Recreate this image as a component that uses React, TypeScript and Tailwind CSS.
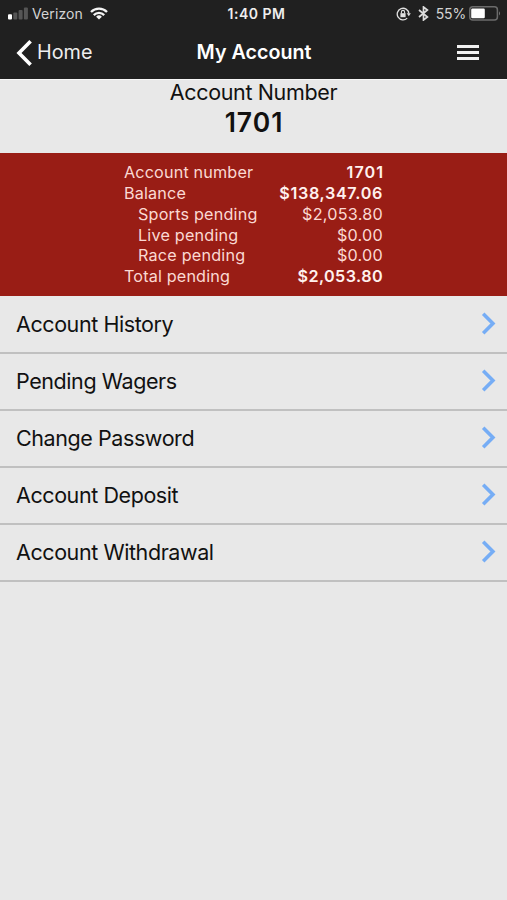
import React from "react";

const accountRows = [
  { label: "Account number", value: "1701", strong: true, tracking: "tracking-[1px] -mr-px" },
  { label: "Balance", value: "$138,347.06", strong: true, tracking: "tracking-[0.65px]" },
  { label: "Sports pending", value: "$2,053.80", indent: true, tracking: "tracking-[0.25px]" },
  { label: "Live pending", value: "$0.00", indent: true, tracking: "tracking-[0.25px]" },
  { label: "Race pending", value: "$0.00", indent: true, tracking: "tracking-[0.25px]" },
  { label: "Total pending", value: "$2,053.80", strong: true, tracking: "tracking-[0.4px]" },
];

const menuItems = [
  "Account History",
  "Pending Wagers",
  "Change Password",
  "Account Deposit",
  "Account Withdrawal",
];

function StatusBar() {
  return (
    <div className="grid h-[27px] grid-cols-3 items-center text-[13px] leading-none text-[#d4d4d4]">
      <div className="flex items-center pl-2">
        <svg width="20" height="13" viewBox="0 0 20 13">
          <rect x="0" y="7.2" width="4" height="5.4" rx="1" fill="#fff" />
          <rect x="5.3" y="5.4" width="4" height="7.2" rx="1" fill="#555" />
          <rect x="10.6" y="3" width="4" height="9.6" rx="1" fill="#555" />
          <rect x="15.9" y="0.5" width="4" height="12.1" rx="1" fill="#555" />
        </svg>
        <span className="ml-[4px] text-[14px] tracking-[0.1px]">Verizon</span>
        <svg className="ml-[7px]" width="18" height="13" viewBox="0 0 18 13" fill="none" stroke="#f4f4f4" strokeWidth="2.3">
          <path d="M1 5a11.3 11.3 0 0 1 16 0" />
          <path d="M3.8 8.1a7.3 7.3 0 0 1 10.4 0" />
          <path d="M9 12.6 6.1 9.8a4.1 4.1 0 0 1 5.8 0z" fill="#f4f4f4" stroke="none" />
        </svg>
      </div>
      <div className="pl-1.5 pt-px text-center text-[14px] font-semibold tracking-[0.5px] text-[#eeeeee]">1:40 PM</div>
      <div className="flex items-center justify-end pr-[6px]">
        <svg width="15" height="14" viewBox="0 0 15 14" fill="none" stroke="#e0e0e0" strokeWidth="1.3">
          <path d="M11.2 11.1A5.8 5.8 0 1 1 12.8 6.4" />
          <path d="M10.7 6.2h4.1l-2 3z" fill="#e0e0e0" stroke="none" />
          <rect x="4.4" y="6.2" width="5.2" height="4" fill="#e0e0e0" stroke="none" />
          <path d="M5.4 6.4V5a1.6 1.6 0 0 1 3.2 0v1.4" strokeWidth="1.1" />
        </svg>
        <svg className="ml-[7px]" width="11" height="15" viewBox="0 0 11 15" fill="none" stroke="#dddddd" strokeWidth="1.7">
          <path d="m1 4 8.4 7L5.5 14V1l3.9 3L1 11" />
        </svg>
        <span className="ml-[7px] text-[14px] tracking-[-0.01em]">55%</span>
        <svg className="ml-[3px]" width="32" height="15" viewBox="0 0 32 15">
          <rect x="0.8" y="0.8" width="27.6" height="13.2" rx="3" fill="none" stroke="#6b6b6b" strokeWidth="1.5" />
          <rect x="2.2" y="2.5" width="13.6" height="9.8" rx="1.2" fill="#fff" />
          <path d="M30 5.2q2 2.2 0 4.4z" fill="#777" />
        </svg>
      </div>
    </div>
  );
}

function NavBar() {
  return (
    <div className="grid h-[52px] grid-cols-[150px_1fr_150px] items-center pb-px text-[#eeeeee]">
      <div className="flex items-center pl-4">
        <svg width="17" height="26" viewBox="0 0 17 26" fill="none" stroke="#fff" strokeWidth="3.6">
          <path d="M14.6 1.3 3 13l11.6 11.7" />
        </svg>
        <span className="ml-[4px] pt-px text-[19.8px] leading-none">Home</span>
      </div>
      <div className="pl-px pt-px text-center text-[19.7px] font-semibold leading-none text-white">My Account</div>
      <div className="flex justify-end pr-[28px]">
        <div className="flex w-[22px] flex-col gap-[3px]">
          <span className="h-[3px] bg-[#f1f1f1]" />
          <span className="h-[3px] bg-[#f1f1f1]" />
          <span className="h-[3px] bg-[#f1f1f1]" />
        </div>
      </div>
    </div>
  );
}

export default function App() {
  return (
    <div className="flex h-[900px] w-[507px] flex-col overflow-hidden bg-[#e8e8e8] font-['Inter','Liberation_Sans',sans-serif] text-[#111111]">
      <header className="h-[79px] shrink-0 bg-[#202020]">
        <StatusBar />
        <NavBar />
      </header>

      <section className="flex h-[74px] shrink-0 flex-col items-center border-t border-[#f7f7f7]">
        <div className="text-[21.5px] leading-[25px] tracking-[-0.35px]">Account Number</div>
        <div className="pl-px text-[26.5px] font-semibold leading-[35px] tracking-[1px]">1701</div>
      </section>

      <section className="flex h-[143px] shrink-0 justify-center bg-[#991d15] pt-[9px] text-[16.2px] text-[#fbd9d3]">
        <div className="w-[259px]">
          {accountRows.map((row) => (
            <div key={row.label} className="flex h-[20.8px] items-center justify-between leading-none">
              <span className={row.indent ? "pl-[14px] tracking-[0.2px]" : "tracking-[0.15px]"}>{row.label}</span>
              <span className={`${row.tracking} ${row.strong ? "font-semibold text-[#fff1ee]" : ""}`}>{row.value}</span>
            </div>
          ))}
        </div>
      </section>

      <nav className="flex flex-col pt-px">
        {menuItems.map((item) => (
          <a key={item} className="flex h-[57px] items-center justify-between border-b-2 border-[#c0c0c0] pl-4 pr-[11px]">
            <span className="text-[21.5px] leading-none tracking-[-0.42px]">{item}</span>
            <svg className="mb-[2px]" width="15" height="23" viewBox="0 0 15 23" fill="none" stroke="#76adf5" strokeWidth="3.6">
              <path d="m2.2 1.8 9.7 9.7-9.7 9.7" />
            </svg>
          </a>
        ))}
      </nav>
    </div>
  );
}
